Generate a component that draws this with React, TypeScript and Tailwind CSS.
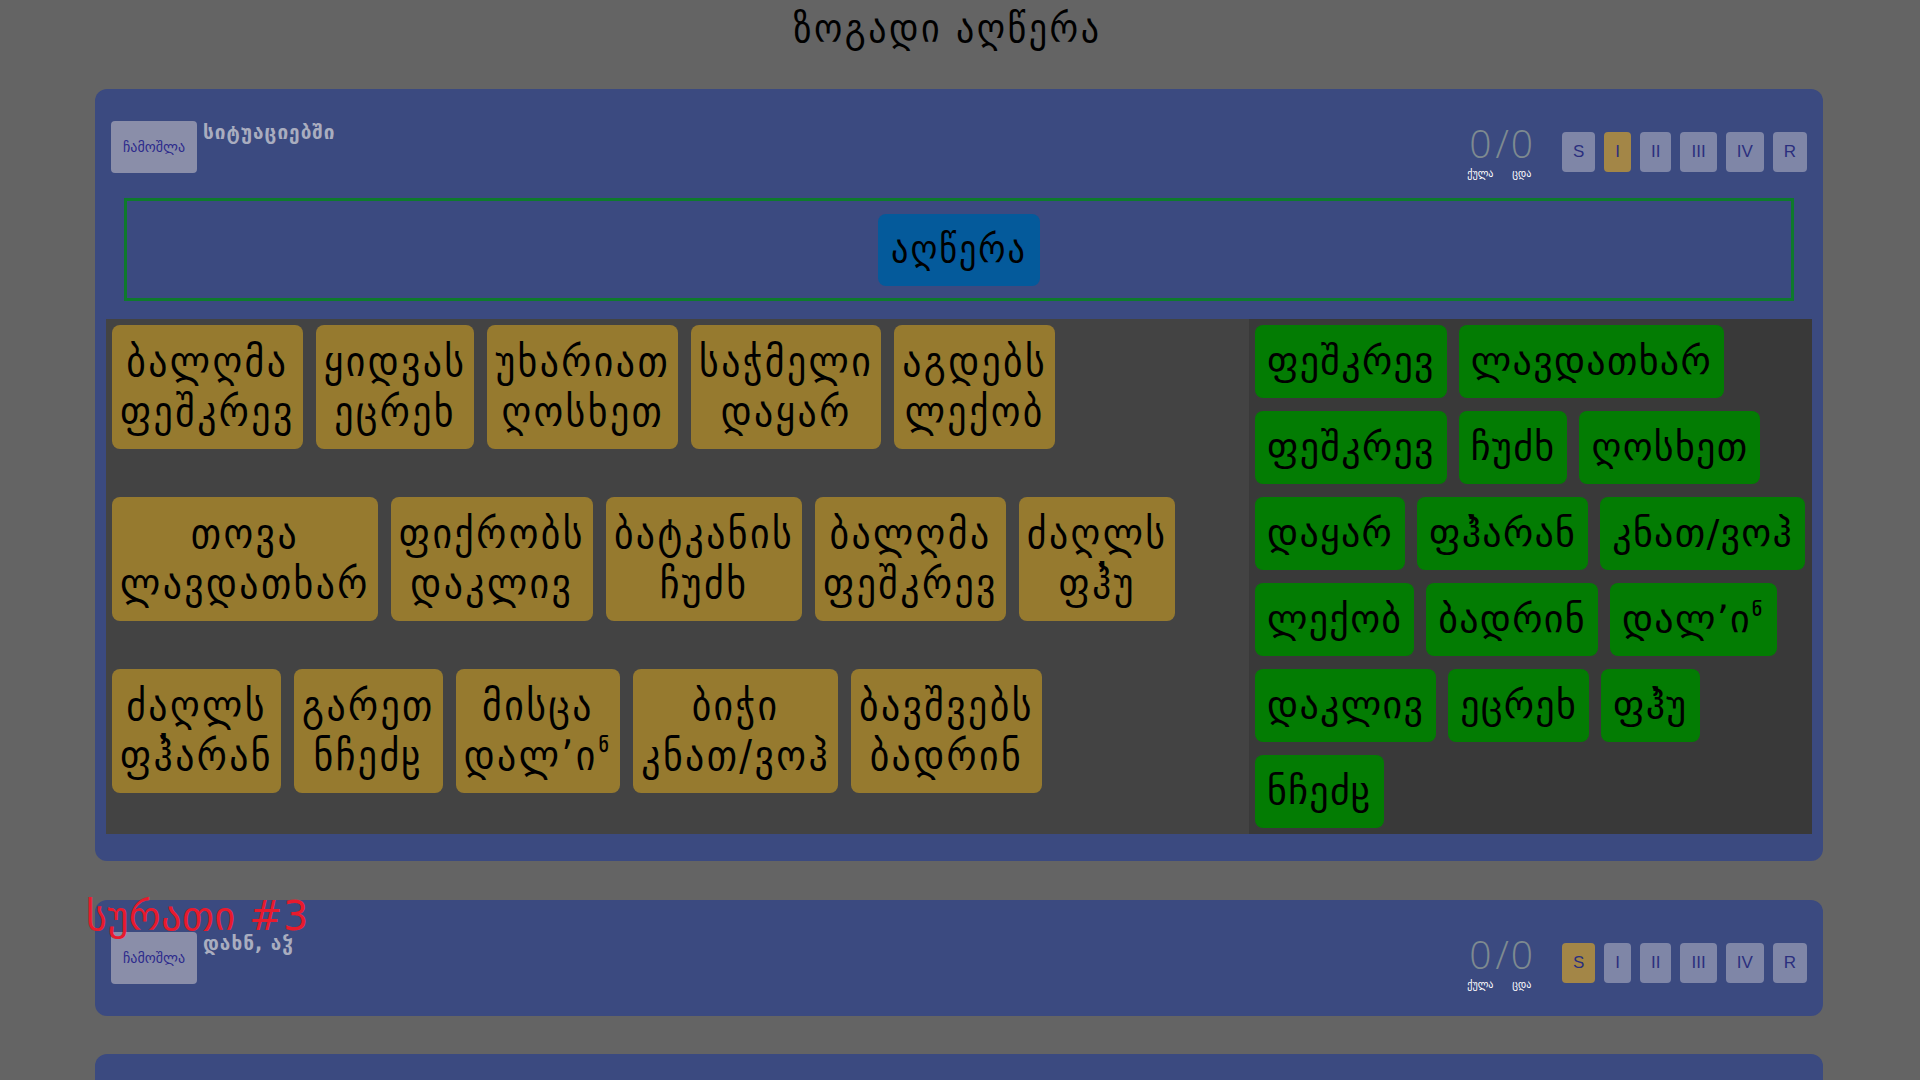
import React from 'react'

const leftRows: string[][][] = [
  [['ბალღმა', 'ფეშკრევ'], ['ყიდვას', 'ეცრეხ'], ['უხარიათ', 'ღოსხეთ'], ['საჭმელი', 'დაყარ'], ['აგდებს', 'ლექობ']],
  [['თოვა', 'ლავდათხარ'], ['ფიქრობს', 'დაკლივ'], ['ბატკანის', 'ჩუძხ'], ['ბალღმა', 'ფეშკრევ'], ['ძაღლს', 'ფჰ̓უ']],
  [['ძაღლს', 'ფჰ̓არან'], ['გარეთ', 'ნჩეძჸ'], ['მისცა', 'დალʼიჼ'], ['ბიჭი', 'კნათ/ვოჰ'], ['ბავშვებს', 'ბადრინ']],
]

const rightRows: string[][] = [
  ['ფეშკრევ', 'ლავდათხარ'],
  ['ფეშკრევ', 'ჩუძხ', 'ღოსხეთ'],
  ['დაყარ', 'ფჰ̓არან', 'კნათ/ვოჰ'],
  ['ლექობ', 'ბადრინ', 'დალʼიჼ'],
  ['დაკლივ', 'ეცრეხ', 'ფჰ̓უ'],
  ['ნჩეძჸ'],
]

const levels = ['S', 'I', 'II', 'III', 'IV', 'R']

function Header({ subtitle, active }: { subtitle: string; active: string }) {
  return (
    <div className="h-[52px] flex items-start justify-between px-[5px]">
      <div className="flex items-start">
        <button className="w-[86px] h-[52px] rounded-[4px] bg-[#8a8ea9] text-[#2c2a8c] text-[14px] font-['DejaVu_Sans',sans-serif]">
          ჩამოშლა
        </button>
        <div className="ml-[6px] -mt-[3px] text-[19px] tracking-[1px] font-bold text-[#a9adbf] font-['DejaVu_Sans',sans-serif]">
          {subtitle}
        </div>
      </div>

      <div className="flex items-start">
        {/* score */}
        <div className="flex items-start text-[#7e8a90] font-['Open_Sans','Liberation_Sans',sans-serif] font-light">
          <div className="flex flex-col items-center">
            <span className="text-[39px] leading-[44px]">0</span>
            <span className="mt-[3px] text-[10px] leading-[12px] text-white font-['DejaVu_Sans',sans-serif] font-normal">ქულა</span>
          </div>
          <span className="text-[39px] leading-[44px] px-[2px]">/</span>
          <div className="flex flex-col items-center">
            <span className="text-[39px] leading-[44px]">0</span>
            <span className="mt-[3px] text-[10px] leading-[12px] text-white font-['DejaVu_Sans',sans-serif] font-normal">ცდა</span>
          </div>
        </div>

        <div className="flex gap-[9px] ml-[29px] mt-[11px]">
          {levels.map((l) => (
            <button
              key={l}
              className={
                'h-[40px] px-[11px] rounded-[4px] text-[17px] text-[#2b2f7e] font-["Liberation_Sans",sans-serif] ' +
                (l === active ? 'bg-[#a38647]' : 'bg-[#7f86a7]')
              }
            >
              {l}
            </button>
          ))}
        </div>
      </div>
    </div>
  )
}

export default function App() {
  return (
    <div className="h-screen overflow-y-scroll bg-[#646464]">
      <div className="w-[1895px] pb-[48px]">
        {/* title */}
        <div className="h-[89px] pt-[1px] text-center text-[40px] tracking-[2.5px] leading-[54px] text-black font-['DejaVu_Sans_Condensed','DejaVu_Sans',sans-serif] font-stretch-condensed">
          ზოგადი აღწერა
        </div>

        {/* panel 1 */}
        <div className="ml-[95px] w-[1728px] rounded-[12px] bg-[#3b4a80] px-[11px] pt-[32px] pb-[27px]">
          <Header subtitle="სიტუაციებში" active="I" />

          <div className="mx-[18px] mt-[25px] h-[103px] border-[3px] border-[#0e7a2c] flex items-center justify-center">
            <button className="h-[72px] px-[13px] rounded-[8px] bg-[#045a9b] text-black text-[38px] tracking-[2px] font-['DejaVu_Sans_Condensed','DejaVu_Sans',sans-serif] font-stretch-condensed">
              აღწერა
            </button>
          </div>

          <div className="mt-[18px] flex">
            {/* sentence cards */}
            <div className="w-[1143px] shrink-0 bg-[#434343] p-[6px] flex flex-col gap-[48px]">
              {leftRows.map((row, i) => (
                <div key={i} className="flex gap-[13px]">
                  {row.map((c, j) => (
                    <div
                      key={j}
                      className="shrink-0 whitespace-nowrap h-[124px] px-[8px] py-[12px] rounded-[8px] bg-[#967a2f] text-black text-center text-[42px] tracking-[2.4px] leading-[50px] font-['DejaVu_Sans_Condensed','DejaVu_Sans',sans-serif] font-stretch-condensed"
                    >
                      <div>{c[0]}</div>
                      <div>{c[1]}</div>
                    </div>
                  ))}
                </div>
              ))}
            </div>

            {/* word tiles */}
            <div className="flex-1 bg-[#393939] p-[6px] flex flex-col gap-[13px]">
              {rightRows.map((row, i) => (
                <div key={i} className="flex gap-[12px]">
                  {row.map((w, j) => (
                    <div
                      key={j}
                      className="shrink-0 whitespace-nowrap h-[73px] px-[12px] flex items-center rounded-[8px] bg-[#037c03] text-black text-[38px] tracking-[1.3px] font-['DejaVu_Sans',sans-serif]"
                    >
                      {w}
                    </div>
                  ))}
                </div>
              ))}
            </div>
          </div>
        </div>

        {/* panel 2 */}
        <div className="relative ml-[95px] w-[1728px] mt-[39px] rounded-[12px] bg-[#3b4a80] px-[11px] pt-[32px] pb-[32px]">
          <div className="absolute -left-[9px] -top-[8px] text-[40px] tracking-[0.5px] leading-[48px] text-[#e81a2d] font-['DejaVu_Sans',sans-serif]">
            სურათი #3
          </div>
          <Header subtitle="დახნ, აჴ" active="S" />
        </div>

        {/* panel 3 */}
        <div className="relative ml-[95px] w-[1728px] mt-[38px] rounded-[12px] bg-[#3b4a80] px-[11px] pt-[32px] pb-[32px]">
          <Header subtitle="" active="S" />
        </div>
      </div>
    </div>
  )
}
